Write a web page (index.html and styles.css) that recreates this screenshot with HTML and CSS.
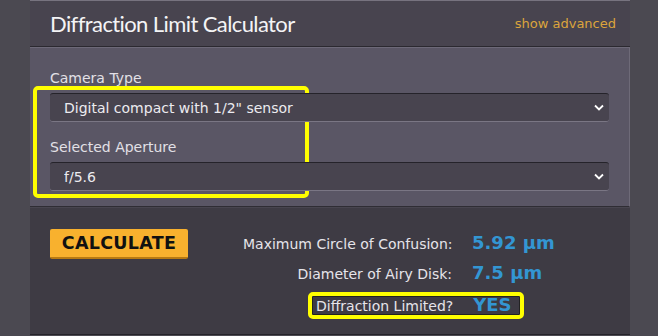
FILE: index.html
```html
<!DOCTYPE html>
<html lang="en">
<head>
    <meta charset="UTF-8">
    <meta name="viewport" content="width=device-width, initial-scale=1.0">
    <title>Diffraction Limit Calculator</title>
    <link rel="stylesheet" href="styles.css">
</head>
<body>
    <div class="calculator">
        <header class="calc-header">
            <h1 class="calc-title">Diffraction Limit Calculator</h1>
            <a class="advanced-link" href="#">show advanced</a>
        </header>

        <div class="calc-inputs">
            <div class="highlight highlight-inputs"></div>
            <label class="field-label" for="camera-type">Camera Type</label>
            <div class="select-wrap">
                <select id="camera-type">
                    <option>Digital compact with 1/2" sensor</option>
                </select>
                <svg class="chevron" width="10" height="7" viewBox="0 0 10 7"><path d="M1 1.5 L5 5.5 L9 1.5" fill="none" stroke="#fff" stroke-width="1.8"/></svg>
            </div>
            <label class="field-label" for="aperture">Selected Aperture</label>
            <div class="select-wrap">
                <select id="aperture">
                    <option>f/5.6</option>
                </select>
                <svg class="chevron" width="10" height="7" viewBox="0 0 10 7"><path d="M1 1.5 L5 5.5 L9 1.5" fill="none" stroke="#fff" stroke-width="1.8"/></svg>
            </div>
        </div>

        <div class="calc-results">
            <button class="calculate-btn">CALCULATE</button>
            <div class="results">
                <div class="result-row">
                    <span class="result-label">Maximum Circle of Confusion:</span>
                    <span class="result-value">5.92 µm</span>
                </div>
                <div class="result-row">
                    <span class="result-label">Diameter of Airy Disk:</span>
                    <span class="result-value">7.5 µm</span>
                </div>
                <div class="result-row limited">
                    <span class="result-label">Diffraction Limited?</span>
                    <span class="result-value">YES</span>
                </div>
            </div>
        </div>
    </div>
</body>
</html>
```

FILE: styles.css
```css
/* General Styling */
body {
    font-family: "DejaVu Sans", Verdana, sans-serif;
    margin: 0;
    padding: 0;
    background-color: #4b4951;
    color: #e2e0e6;
    overflow: hidden;
}

.calculator {
    width: 600px;
    margin-left: 30px;
}

/* Header */
.calc-header {
    height: 45px;
    display: flex;
    justify-content: space-between;
    align-items: center;
    padding: 0 14px 0 20px;
    background-color: #48444f;
    border-top: 1px solid #77737f;
    border-bottom: 1px solid #2b2930;
}

.calc-title {
    margin: 0;
    font-family: Lato, "Open Sans", sans-serif;
    font-weight: normal;
    font-size: 22px;
    color: #f4f4f6;
    letter-spacing: -0.6px;
}

.advanced-link {
    color: #dca43c;
    font-size: 13px;
    text-decoration: none;
}

/* Inputs */
.calc-inputs {
    position: relative;
    background-color: #5a5665;
    border-top: 1px solid #6d6978;
    border-right: 1px solid #6e6a78;
    border-bottom: 1px solid #2f2d34;
    padding: 22px 20px 15px 20px;
    display: flex;
    flex-direction: column;
}

.field-label {
    font-size: 14px;
    line-height: 16px;
    margin-bottom: 7px;
}

.select-wrap {
    position: relative;
    margin-bottom: 17px;
}

.select-wrap:last-child {
    margin-bottom: 0;
}

.select-wrap select {
    width: 100%;
    height: 29px;
    appearance: none;
    -webkit-appearance: none;
    background-color: #48444f;
    color: #ecebef;
    font-family: "DejaVu Sans", Verdana, sans-serif;
    font-size: 14px;
    padding: 0 14px;
    border: none;
    border-top: 1px solid #25232a;
    border-bottom: 1px solid #7a7684;
    border-radius: 3px;
}

.chevron {
    position: absolute;
    right: 5px;
    top: 11px;
}

/* Annotation highlight */
.highlight {
    position: absolute;
    border: 4px solid #ffff00;
    border-radius: 5px;
}

.highlight-inputs {
    left: 3px;
    top: 38px;
    width: 268px;
    height: 104px;
}

/* Results */
.calc-results {
    background-color: #3e3b44;
    border-top: 1px solid #48454f;
    border-bottom: 1px solid #25232a;
    padding: 21px 20px 15px 20px;
    display: flex;
    align-items: flex-start;
}

.calculate-btn {
    flex-shrink: 0;
    background-color: #f8b12e;
    color: #111;
    font-family: "DejaVu Sans", Verdana, sans-serif;
    font-weight: bold;
    font-size: 17.5px;
    letter-spacing: 0.3px;
    width: 138px;
    padding: 0;
    height: 30px;
    border: none;
    border-bottom: 2px solid #b87a12;
    border-radius: 2px;
    cursor: pointer;
}

.results {
    margin-left: 55px;
    display: flex;
    flex-direction: column;
    gap: 9px;
    padding-top: 3px;
}

.result-row {
    display: flex;
    align-items: baseline;
    white-space: nowrap;
}

.result-label {
    flex-shrink: 0;
    width: 209px;
    text-align: right;
    font-size: 14px;
    color: #e6e4ea;
}

.result-value {
    margin-left: 20px;
    font-size: 18px;
    font-weight: bold;
    color: #3396d3;
}

.limited {
    align-self: flex-start;
    margin-left: 65px;
    margin-top: 0;
    border: 4px solid #ffff00;
    border-radius: 5px;
    padding: 0 8px 0 4px;
    line-height: 17px;
    box-shadow: inset 0 0 0 1px #222;
}

.limited .result-label {
    width: auto;
}
```
